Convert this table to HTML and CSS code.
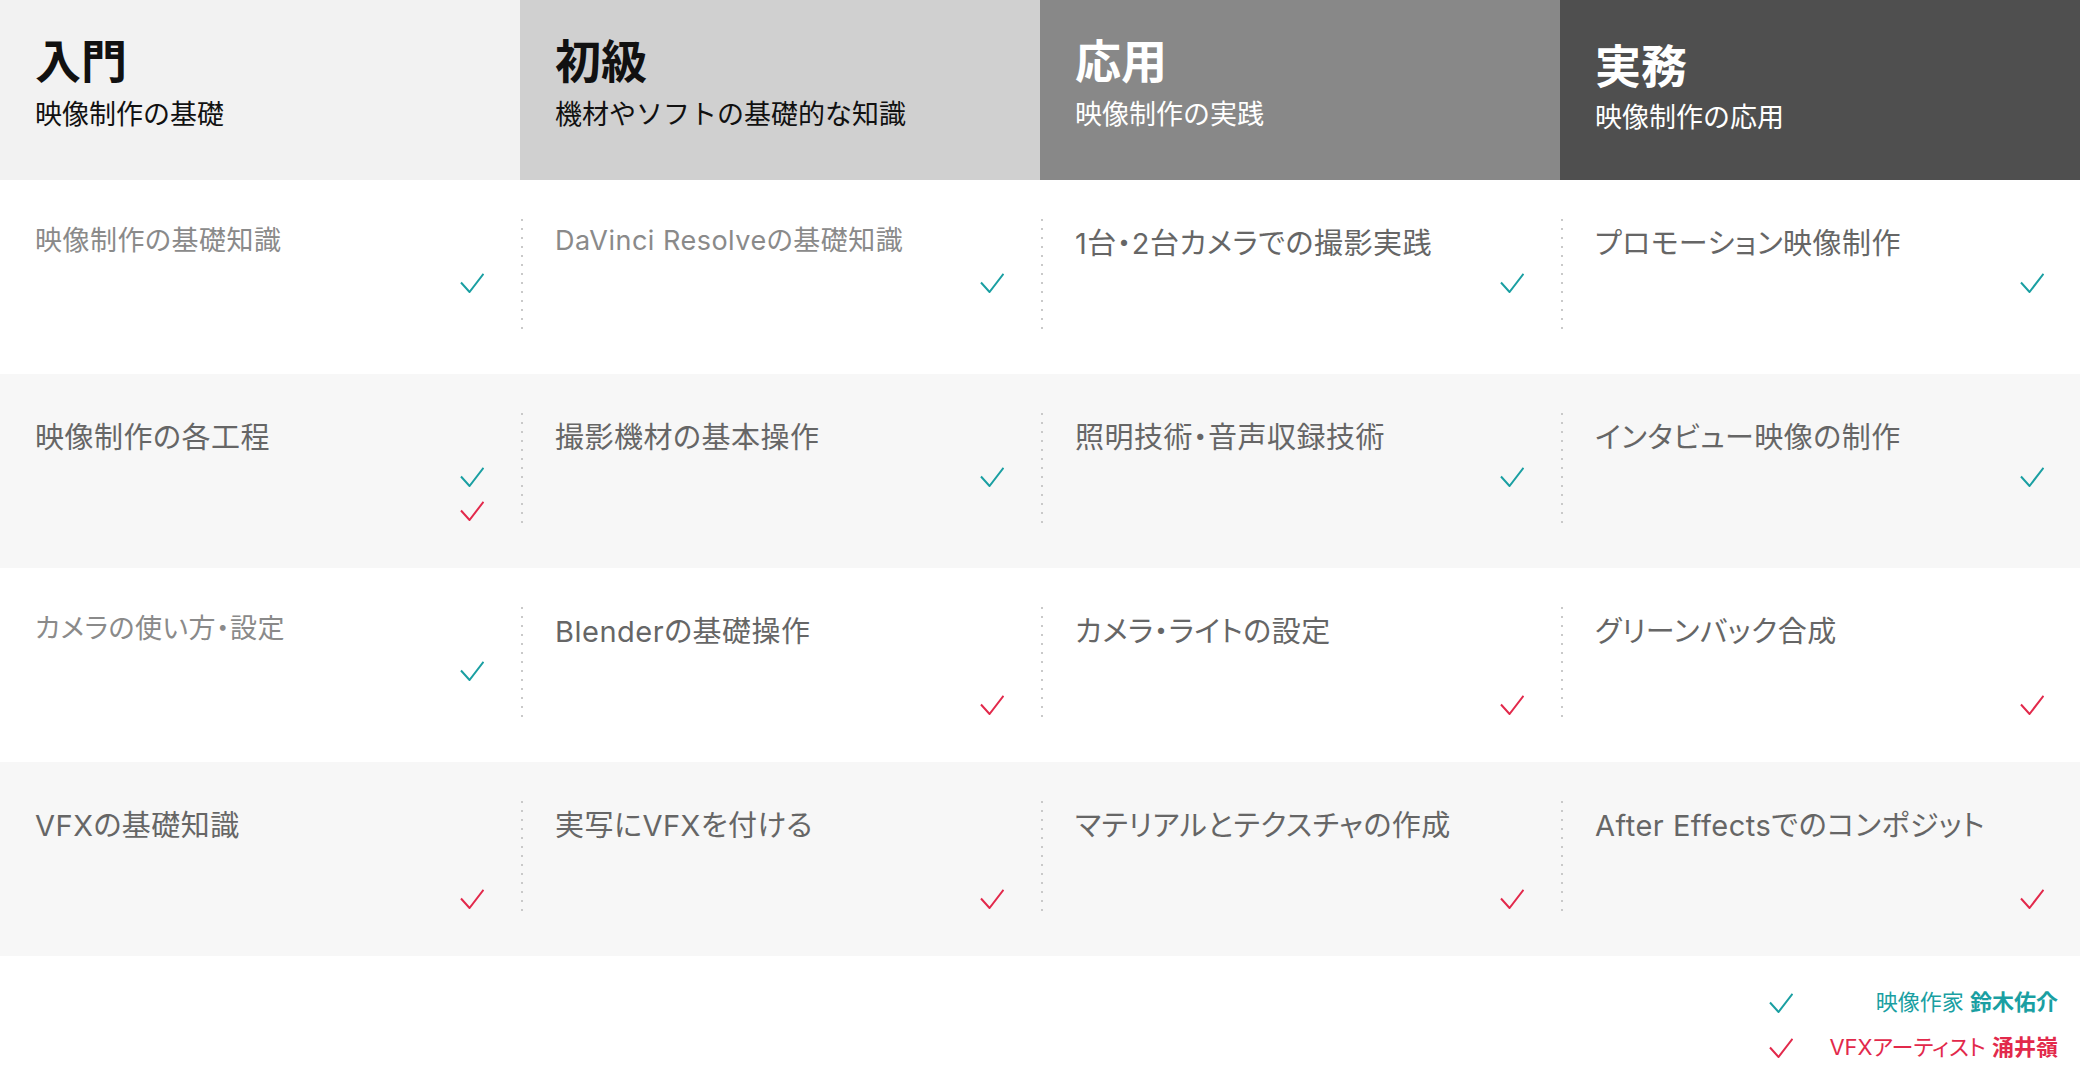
FILE: index.html
```html
<!DOCTYPE html>
<html lang="ja">
<head>
  <meta charset="UTF-8" />
  <title>カリキュラム</title>
  <link rel="stylesheet" href="styles.css">
</head>
<body>
  <svg width="0" height="0" class="defs">
    <symbol id="tick" viewBox="0 0 24 20">
      <path d="M1 9.5 L9.5 19 L23.5 0.8" fill="none" stroke="currentColor" stroke-width="2"/>
    </symbol>
  </svg>

  <div class="curriculum">
    <div class="levels">
      <div class="level level--intro">
        <h2>入門</h2>
        <p>映像制作の基礎</p>
      </div>
      <div class="level level--basic">
        <h2>初級</h2>
        <p>機材やソフトの基礎的な知識</p>
      </div>
      <div class="level level--applied">
        <h2>応用</h2>
        <p>映像制作の実践</p>
      </div>
      <div class="level level--pro">
        <h2>実務</h2>
        <p>映像制作の応用</p>
      </div>
    </div>

    <div class="row">
      <div class="cell"><div class="cell-inner">
        <span class="topic topic--light">映像制作の基礎知識</span>
        <div class="checks"><svg class="check check--teal"><use href="#tick"/></svg></div>
      </div></div>
      <div class="cell"><div class="cell-inner">
        <span class="topic topic--light">DaVinci Resolveの基礎知識</span>
        <div class="checks"><svg class="check check--teal"><use href="#tick"/></svg></div>
      </div></div>
      <div class="cell"><div class="cell-inner">
        <span class="topic">1台・2台カメラでの撮影実践</span>
        <div class="checks"><svg class="check check--teal"><use href="#tick"/></svg></div>
      </div></div>
      <div class="cell"><div class="cell-inner">
        <span class="topic">プロモーション映像制作</span>
        <div class="checks"><svg class="check check--teal"><use href="#tick"/></svg></div>
      </div></div>
    </div>

    <div class="row row--alt">
      <div class="cell"><div class="cell-inner">
        <span class="topic">映像制作の各工程</span>
        <div class="checks">
          <svg class="check check--teal"><use href="#tick"/></svg>
          <svg class="check check--red"><use href="#tick"/></svg>
        </div>
      </div></div>
      <div class="cell"><div class="cell-inner">
        <span class="topic">撮影機材の基本操作</span>
        <div class="checks"><svg class="check check--teal"><use href="#tick"/></svg></div>
      </div></div>
      <div class="cell"><div class="cell-inner">
        <span class="topic">照明技術・音声収録技術</span>
        <div class="checks"><svg class="check check--teal"><use href="#tick"/></svg></div>
      </div></div>
      <div class="cell"><div class="cell-inner">
        <span class="topic">インタビュー映像の制作</span>
        <div class="checks"><svg class="check check--teal"><use href="#tick"/></svg></div>
      </div></div>
    </div>

    <div class="row">
      <div class="cell"><div class="cell-inner">
        <span class="topic topic--light">カメラの使い方・設定</span>
        <div class="checks"><svg class="check check--teal"><use href="#tick"/></svg></div>
      </div></div>
      <div class="cell"><div class="cell-inner">
        <span class="topic">Blenderの基礎操作</span>
        <div class="checks"><svg class="check check--red"><use href="#tick"/></svg></div>
      </div></div>
      <div class="cell"><div class="cell-inner">
        <span class="topic">カメラ・ライトの設定</span>
        <div class="checks"><svg class="check check--red"><use href="#tick"/></svg></div>
      </div></div>
      <div class="cell"><div class="cell-inner">
        <span class="topic">グリーンバック合成</span>
        <div class="checks"><svg class="check check--red"><use href="#tick"/></svg></div>
      </div></div>
    </div>

    <div class="row row--alt">
      <div class="cell"><div class="cell-inner">
        <span class="topic">VFXの基礎知識</span>
        <div class="checks"><svg class="check check--red"><use href="#tick"/></svg></div>
      </div></div>
      <div class="cell"><div class="cell-inner">
        <span class="topic">実写にVFXを付ける</span>
        <div class="checks"><svg class="check check--red"><use href="#tick"/></svg></div>
      </div></div>
      <div class="cell"><div class="cell-inner">
        <span class="topic">マテリアルとテクスチャの作成</span>
        <div class="checks"><svg class="check check--red"><use href="#tick"/></svg></div>
      </div></div>
      <div class="cell"><div class="cell-inner">
        <span class="topic">After Effectsでのコンポジット</span>
        <div class="checks"><svg class="check check--red"><use href="#tick"/></svg></div>
      </div></div>
    </div>

    <div class="legend">
      <svg class="check check--teal"><use href="#tick"/></svg>
      <span class="legend-name legend-name--teal">映像作家 <strong>鈴木佑介</strong></span>
      <svg class="check check--red"><use href="#tick"/></svg>
      <span class="legend-name legend-name--red">VFXアーティスト <strong>涌井嶺</strong></span>
    </div>
  </div>
</body>
</html>
```

FILE: styles.css
```css
body {
  margin: 0;
  background: #fff;
  font-family: 'Noto Sans CJK JP', 'Noto Sans', sans-serif;
  color: #666;
}
.defs {
  position: absolute;
}
.levels {
  display: grid;
  grid-template-columns: repeat(4, 1fr);
  height: 180px;
}
.level {
  padding: 31px 35px 0;
}
.level h2 {
  margin: 0;
  font-size: 46px;
  line-height: 55px;
  font-weight: 700;
}
.level p {
  margin: 8px 0 0;
  font-size: 27px;
  line-height: 38px;
}
.level--intro {
  background-color: #f2f2f2;
  color: #111;
}
.level--basic {
  background-color: #d0d0d0;
  color: #111;
}
.level--applied {
  background-color: #888;
  color: #fff;
}
.level--pro {
  background-color: #4f4f4f;
  color: #fff;
  padding-top: 36px;
}
.level--pro p {
  margin-top: 6px;
}
.row {
  display: grid;
  grid-template-columns: repeat(4, 1fr);
  height: 194px;
}
.row--alt {
  background-color: #f7f7f7;
}
.cell {
  padding: 39px 0;
}
.cell-inner {
  display: flex;
  justify-content: space-between;
  height: 116px;
  padding: 0 36px 0 35px;
}
.cell + .cell .cell-inner {
  background-image: linear-gradient(to bottom, #c9c9c9 0 2px, transparent 2px);
  background-size: 2px 9px;
  background-repeat: repeat-y;
  background-position: 1px 0;
}
.topic {
  font-family: Inter, 'Noto Sans CJK JP', sans-serif;
  font-size: 29px;
  line-height: 40px;
  letter-spacing: 0.5px;
  padding-top: 5px;
  color: #666;
  font-feature-settings: "palt";
  white-space: nowrap;
}
.topic--light {
  font-size: 27px;
  padding-top: 2px;
  color: #8a8a8a;
}
.checks {
  display: grid;
  grid-template-rows: 19px 19px;
  row-gap: 15px;
  padding-top: 54px;
}
.check {
  width: 24px;
  height: 20px;
  display: block;
}
.check--teal {
  color: #1a9fa2;
  grid-row: 1;
}
.check--red {
  color: #e2294b;
  grid-row: 2;
}
.legend {
  display: grid;
  grid-template-columns: 24px auto;
  grid-auto-rows: 30px;
  column-gap: 36px;
  row-gap: 15px;
  align-items: center;
  justify-content: end;
  padding: 31px 22px 0 0;
}
.legend .check {
  grid-row: auto;
  margin-top: 2px;
}
.legend-name {
  justify-self: end;
  font-family: Inter, 'Noto Sans CJK JP', sans-serif;
  font-size: 22px;
  line-height: 30px;
  font-feature-settings: "palt";
  white-space: nowrap;
}
.legend-name strong {
  font-weight: 700;
}
.legend-name--teal {
  color: #1a9fa2;
}
.legend-name--red {
  color: #e2294b;
}
```
